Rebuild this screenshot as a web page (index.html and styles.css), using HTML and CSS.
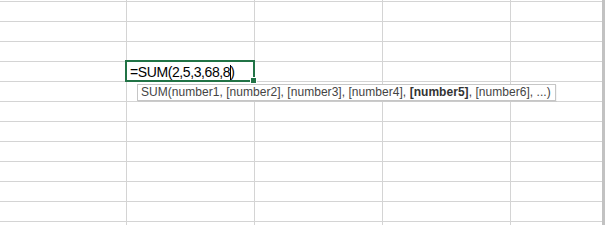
FILE: index.html
```html
<!DOCTYPE html>
<html lang="en">
<head>
<meta charset="utf-8">
<title>Sheet</title>
<link rel="stylesheet" href="styles.css">
</head>
<body>
<div class="window">
  <div class="sheet">
    <div class="cell"></div><div class="cell"></div><div class="cell"></div><div class="cell"></div><div class="cell"></div>
    <div class="cell"></div><div class="cell"></div><div class="cell"></div><div class="cell"></div><div class="cell"></div>
    <div class="cell"></div><div class="cell"></div><div class="cell"></div><div class="cell"></div><div class="cell"></div>
    <div class="cell"></div><div class="cell"></div><div class="cell"></div><div class="cell"></div><div class="cell"></div>
    <div class="cell"></div>
    <div class="cell active">
      <span class="entry">=SUM(2,5,3,68,8<span class="caret"></span>)</span>
      <div class="tip">SUM(number1, [number2], [number3], [number4], <b>[number5]</b>, [number6], ...)</div>
    </div>
    <div class="cell"></div><div class="cell"></div><div class="cell"></div>
    <div class="cell"></div><div class="cell"></div><div class="cell"></div><div class="cell"></div><div class="cell"></div>
    <div class="cell"></div><div class="cell"></div><div class="cell"></div><div class="cell"></div><div class="cell"></div>
    <div class="cell"></div><div class="cell"></div><div class="cell"></div><div class="cell"></div><div class="cell"></div>
    <div class="cell"></div><div class="cell"></div><div class="cell"></div><div class="cell"></div><div class="cell"></div>
    <div class="cell"></div><div class="cell"></div><div class="cell"></div><div class="cell"></div><div class="cell"></div>
    <div class="cell"></div><div class="cell"></div><div class="cell"></div><div class="cell"></div><div class="cell"></div>
    <div class="cell"></div><div class="cell"></div><div class="cell"></div><div class="cell"></div><div class="cell"></div>
    <div class="cell"></div><div class="cell"></div><div class="cell"></div><div class="cell"></div><div class="cell"></div>
  </div>
  <div class="edge"></div>
</div>
</body>
</html>
```

FILE: styles.css
```css
html, body {
  margin: 0;
  padding: 0;
  background: #ffffff;
}

.window {
  display: flex;
  width: 605px;
  height: 225px;
  overflow: hidden;
}

.sheet {
  flex: 0 0 602px;
  display: grid;
  grid-template-columns: 127px 128px 128px 128px 91px;
  grid-auto-rows: 20px;
  margin-top: -18px;
  align-self: flex-start;
}

.edge {
  flex: 0 0 3px;
  background: #c2c2c2;
}

.cell {
  box-sizing: border-box;
  border-right: 1px solid #d4d4d4;
  border-bottom: 1px solid #d4d4d4;
}

.cell:nth-child(5n) {
  border-right: none;
}

.active {
  position: relative;
  z-index: 2;
  padding: 1px 0 0 3px;
  font-family: "Liberation Sans", Arial, sans-serif;
  font-size: 14px;
  line-height: 18px;
  letter-spacing: -0.4px;
  color: #000000;
  white-space: nowrap;
}

.active::before {
  content: "";
  position: absolute;
  top: -2px;
  left: -2px;
  right: -1px;
  bottom: -1px;
  border: 2px solid #217346;
  pointer-events: none;
}

.active::after {
  content: "";
  position: absolute;
  right: -3px;
  bottom: -3px;
  width: 7px;
  height: 7px;
  box-sizing: border-box;
  background: #217346;
  border: 1px solid #ffffff;
}

.caret {
  display: inline-block;
  width: 1px;
  height: 15px;
  margin-right: -1px;
  background: #000000;
  vertical-align: -3px;
}

.tip {
  position: absolute;
  top: 22px;
  left: 10px;
  padding: 0 4px 0 3px;
  background: #ffffff;
  border: 1px solid #c6c6c6;
  box-shadow: 1px 1px 0 rgba(0, 0, 0, 0.04);
  font-family: "Liberation Sans", Arial, sans-serif;
  font-size: 12px;
  line-height: 15px;
  letter-spacing: 0.04px;
  color: #444444;
  white-space: nowrap;
}

.tip b {
  font-weight: bold;
  color: #333333;
}
```
